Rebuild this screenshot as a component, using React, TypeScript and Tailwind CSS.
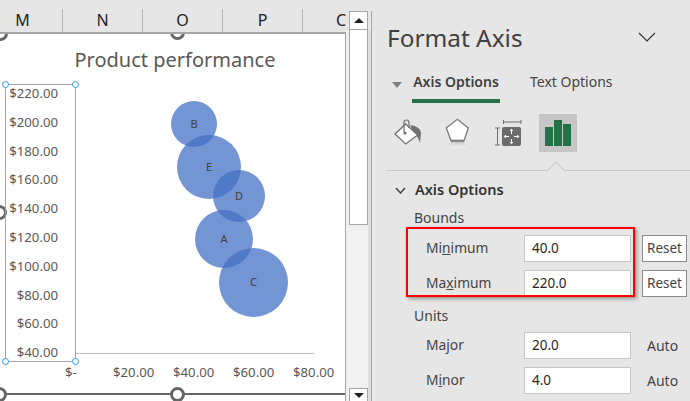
const font = "font-['Noto_Sans','Open_Sans',sans-serif]";

const yLabels = ['$220.00', '$200.00', '$180.00', '$160.00', '$140.00', '$120.00', '$100.00', '$80.00', '$60.00', '$40.00'];

function Handle({ className }: { className: string }) {
  return <div className={`absolute w-[7px] h-[7px] rounded-full bg-white border border-[#2e9bea] ${className}`}></div>;
}

function GrayHandle({ className }: { className: string }) {
  return <div className={`absolute w-[15px] h-[15px] rounded-full bg-white border-[3px] border-[#666666] ${className}`}></div>;
}

function Bubble({ label, className }: { label: string; className: string }) {
  return (
    <div className={`absolute rounded-full bg-[#4472c4]/75 flex items-center justify-center text-[11px] text-[#404040] ${className}`}>
      {label}
    </div>
  );
}

function Chart() {
  return (
    <div className="relative flex-1 bg-white border-r border-[#a6a6a6] border-t-[2px] border-t-[#a6a6a6] overflow-hidden">
      <GrayHandle className="left-[-7px] top-[-8px]" />
      <GrayHandle className="left-[170px] top-[-9px]" />
      <GrayHandle className="left-[-8px] top-[171px]" />
      <p className="text-center text-[20px] leading-[27px] text-[#595959] w-[345px] pl-[5px] mt-[12px]">Product performance</p>

      <div className="absolute left-[5px] top-[50px] w-[71px] h-[278px] border border-[#a6a6a6]"></div>
      <div className="absolute left-0 top-[45px] w-[58px] flex flex-col items-end text-[13.2px] leading-[28.8px] text-[#595959]">
        {yLabels.map((label) => (
          <span key={label}>{label}</span>
        ))}
      </div>
      <div className="absolute left-[76px] top-[319px] w-[238px] h-px bg-[#bfbfbf]"></div>
      <span className="absolute left-[65px] top-[329px] text-[13.2px] text-[#595959]">$-</span>
      <span className="absolute left-[113px] top-[329px] text-[13.2px] text-[#595959]">$20.00</span>
      <span className="absolute left-[173px] top-[329px] text-[13.2px] text-[#595959]">$40.00</span>
      <span className="absolute left-[233px] top-[329px] text-[13.2px] text-[#595959]">$60.00</span>
      <span className="absolute left-[293px] top-[329px] text-[13.2px] text-[#595959]">$80.00</span>

      <Bubble label="B" className="left-[171px] top-[67px] w-[46px] h-[46px]" />
      <Bubble label="E" className="left-[177px] top-[101px] w-[64px] h-[64px]" />
      <Bubble label="D" className="left-[213px] top-[136px] w-[52px] h-[52px]" />
      <Bubble label="A" className="left-[195px] top-[176px] w-[58px] h-[58px]" />
      <Bubble label="C" className="left-[219px] top-[214px] w-[69px] h-[69px]" />

      <Handle className="left-[2px] top-[47px]" />
      <Handle className="left-[72px] top-[47px]" />
      <Handle className="left-[2px] top-[324px]" />
      <Handle className="left-[72px] top-[324px]" />

      <div className="absolute left-0 right-0 top-[359px] h-[2px] bg-[#666666]"></div>
      <GrayHandle className="left-[-8px] top-[353px]" />
      <GrayHandle className="left-[170px] top-[353px]" />
    </div>
  );
}

function Scrollbar() {
  return (
    <div className="w-[25px] shrink-0 pt-[11px] flex flex-col">
      <div className="h-[19px] w-[19px] ml-[3px] shrink-0 bg-white border border-[#a6a6a6] flex items-center justify-center">
        <div className="w-0 h-0 border-l-[5px] border-r-[5px] border-b-[5px] border-l-transparent border-r-transparent border-b-[#222222]"></div>
      </div>
      <div className="flex-1 flex flex-col pl-[3px] bg-[#f0f0f0] border-r-[3px] border-[#dedede]">
        <div className="h-[195px] bg-white border-x border-b border-[#a6a6a6]"></div>
        <div className="flex-1"></div>
        <div className="h-[13px] bg-white border border-b-0 border-[#a6a6a6] flex items-center justify-center">
          <div className="w-0 h-0 border-l-[5px] border-r-[5px] border-t-[5px] border-l-transparent border-r-transparent border-t-[#222222]"></div>
        </div>
      </div>
    </div>
  );
}

function PanelIcons() {
  return (
    <div className="flex items-center h-[38px]">
      <svg width="30" height="30" viewBox="0 0 30 30" className="ml-[6px]">
        <path d="M17 7 Q27 8 28 15 L27 25 Q25 18 21 15 Z" fill="#707070" />
        <path d="M12.7 6 L24.7 17 L12.7 26 L2 16 Z" fill="#fff" stroke="#707070" strokeWidth="1.3" />
        <path d="M11 14 V5 Q11 2 13.5 2 Q16 2 16 5 V10" fill="none" stroke="#707070" strokeWidth="1.2" />
        <circle cx="12" cy="15" r="1.6" fill="#707070" />
      </svg>
      <svg width="28" height="32" viewBox="0 0 28 32" className="ml-[21px] mt-[2px]">
        <defs>
          <linearGradient id="shade" x1="0" y1="0" x2="0" y2="1">
            <stop offset="0" stopColor="#c4c4c4" />
            <stop offset="1" stopColor="#f2f2f2" />
          </linearGradient>
        </defs>
        <path d="M7 23 H20 L22 30 H5 Z" fill="url(#shade)" />
        <path d="M13.3 1.3 L24.3 10 L20 22.7 H7 L2.3 10 Z" fill="#fff" stroke="#808080" strokeWidth="1.4" />
        <path d="M7 22.7 H20" stroke="#808080" strokeWidth="2" />
      </svg>
      <svg width="28" height="28" viewBox="0 0 28 28" className="ml-[22px]">
        <path d="M9.5 3 H27 M9.5 1 V5 M27 1 V5" stroke="#707070" strokeWidth="1" fill="none" />
        <path d="M1 9 H6 M3.5 9 V26 M1 26 H6" stroke="#707070" strokeWidth="1" fill="none" />
        <rect x="8" y="8" width="19" height="19" rx="2" fill="#6b6b6b" />
        <path d="M17.5 11 V15 M17.5 20 V24 M11 17.5 H15 M20 17.5 H24" stroke="#fff" strokeWidth="1" />
        <path d="M17.5 9.5 L15.7 12 H19.3 Z M17.5 25.5 L15.7 23 H19.3 Z M9.5 17.5 L12 15.7 V19.3 Z M25.5 17.5 L23 15.7 V19.3 Z" fill="#fff" />
      </svg>
      <div className="w-[38px] h-[38px] ml-[17px] bg-[#c6c6c6] flex items-end justify-center gap-px pb-[6px]">
        <div className="w-[8px] h-[19px] bg-[#217346]"></div>
        <div className="w-[8px] h-[26px] bg-[#217346]"></div>
        <div className="w-[8px] h-[22px] bg-[#217346]"></div>
      </div>
    </div>
  );
}

function FieldRow({ label, value, side, button }: { label: React.ReactNode; value: string; side: string; button?: boolean }) {
  return (
    <div className="flex items-center h-[27px]">
      <span className="w-[122px] pl-[24px] text-[13.8px] text-[#444444]">{label}</span>
      <div className="w-[107px] h-[27px] bg-white border border-[#c6c6c6] pl-[7px] text-[13.5px] leading-[25px] text-[#262626]">{value}</div>
      {button ? (
        <div className="ml-[11px] w-[45px] h-[27px] bg-white border border-[#8a8a8a] text-center text-[13.5px] leading-[25px] text-[#444444]">{side}</div>
      ) : (
        <span className="ml-[16px] text-[14px] text-[#444444]">{side}</span>
      )}
    </div>
  );
}

function Panel() {
  return (
    <div className="relative flex-1 mt-[11px] border-l border-[#a6a6a6] pl-[15px] overflow-hidden">
      <div className="flex items-center justify-between h-[36px] mt-[9px] pr-[34px]">
        <span className="text-[24.4px] leading-[36px] text-[#404040]">Format Axis</span>
        <svg width="18" height="10" viewBox="0 0 18 10" className="mt-[-3px]">
          <path d="M1 1 L9 9 L17 1" fill="none" stroke="#333333" strokeWidth="1.2" />
        </svg>
      </div>
      <div className="flex items-start mt-[16px] h-[31px]">
        <div className="w-0 h-0 mt-[10px] ml-[5px] border-l-[5.5px] border-r-[5.5px] border-t-[6px] border-l-transparent border-r-transparent border-t-[#7f7f7f]"></div>
        <div className="ml-[10px] w-[88px] h-[31px] text-center text-[14px] leading-[20px] font-semibold text-[#404040] border-b-4 border-[#217346]">Axis Options</div>
        <span className="ml-[30px] text-[14px] leading-[20px] text-[#444444]">Text Options</span>
      </div>
      <div className="mt-[11px]">
        <PanelIcons />
      </div>
      <div className="relative mt-[18px] ml-[-1px] h-px bg-[#c8c8c8]">
        <div className="absolute left-[164px] top-[-6px] w-[12px] h-[12px] rotate-45 bg-[#e6e6e6] border-l border-t border-[#c8c8c8]"></div>
      </div>
      <div className="flex items-center mt-[9px] h-[20px] pl-[8px]">
        <svg width="11" height="7" viewBox="0 0 11 7">
          <path d="M1 1 L5.5 6 L10 1" fill="none" stroke="#404040" strokeWidth="1.4" />
        </svg>
        <span className="ml-[9px] text-[14.5px] font-semibold text-[#333333]">Axis Options</span>
      </div>
      <p className="mt-[8px] pl-[27px] text-[14px] leading-[20px] text-[#444444]">Bounds</p>
      <div className="mt-[7px] pl-[15px] flex flex-col gap-[8px]">
        <FieldRow label={<>Mi<u>n</u>imum</>} value="40.0" side="Reset" button />
        <FieldRow label={<>Ma<u>x</u>imum</>} value="220.0" side="Reset" button />
      </div>
      <p className="mt-[9px] pl-[27px] text-[14px] leading-[20px] text-[#444444]">Units</p>
      <div className="mt-[6px] pl-[15px] flex flex-col gap-[8px]">
        <FieldRow label={<>Ma<u>j</u>or</>} value="20.0" side="Auto" />
        <FieldRow label={<>M<u>i</u>nor</>} value="4.0" side="Auto" />
      </div>
      <div className="absolute left-[34px] top-[216px] w-[229px] h-[70px] border-[2px] border-[#ff0000] shadow-[2px_2px_4px_rgba(0,0,0,0.35)]"></div>
    </div>
  );
}

export default function App() {
  return (
    <div className={`w-[690px] h-[401px] flex overflow-hidden bg-[#e6e6e6] ${font}`}>
      <div className="w-[346px] shrink-0 flex flex-col">
        <div className="flex h-[32px] pt-[9px] shrink-0 overflow-hidden text-[16px] leading-[22px] text-[#222222]">
          <div className="w-[80px] ml-[-17px] shrink-0 text-center border-r border-[#b8b8b8]">M</div>
          <div className="w-[80px] shrink-0 text-center border-r border-[#b8b8b8]">N</div>
          <div className="w-[80px] shrink-0 text-center border-r border-[#b8b8b8]">O</div>
          <div className="w-[80px] shrink-0 text-center border-r border-[#b8b8b8]">P</div>
          <div className="w-[43px] shrink-0 pl-[33px] overflow-hidden">C</div>
        </div>
        <Chart />
      </div>
      <Scrollbar />
      <Panel />
    </div>
  );
}
